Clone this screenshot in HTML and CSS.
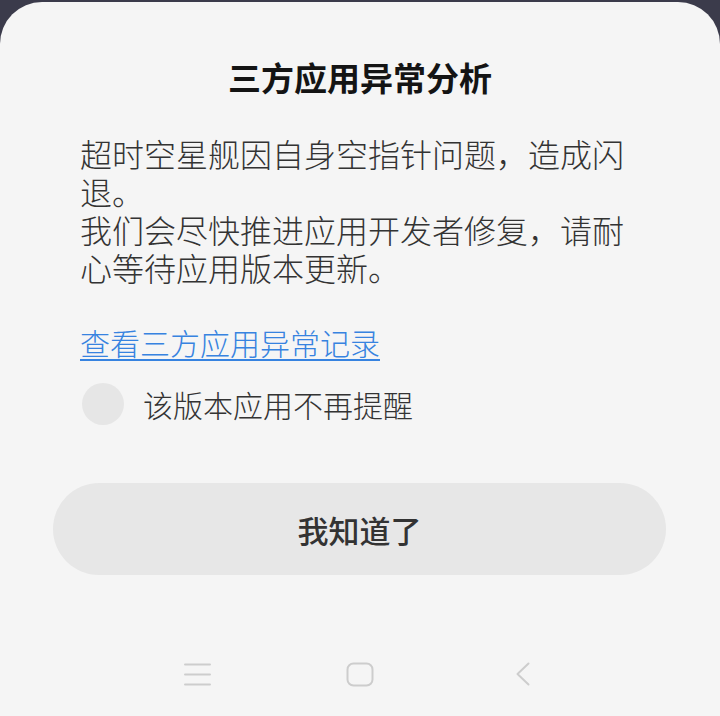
FILE: index.html
```html
<!DOCTYPE html>
<html lang="zh-CN">
<head>
<meta charset="utf-8">
<title>三方应用异常分析</title>
<link rel="stylesheet" href="styles.css">
</head>
<body>
<div class="sheet">
  <h1 class="title">三方应用异常分析</h1>
  <p class="message">超时空星舰因自身空指针问题，造成闪退。<br>我们会尽快推进应用开发者修复，请耐心等待应用版本更新。</p>
  <a class="record-link" href="#">查看三方应用异常记录</a>
  <label class="check-row">
    <span class="check-circle"></span>
    <span class="check-text">该版本应用不再提醒</span>
  </label>
  <button class="ok-button" type="button">我知道了</button>
  <nav class="navbar">
    <span class="nav-item">
      <svg width="27" height="23" viewBox="0 0 27 23" fill="none" stroke="#cdcdcd" stroke-width="2" stroke-linecap="round"><path d="M1 1.5H26M1 11.5H26M1 21.5H26"/></svg>
    </span>
    <span class="nav-item">
      <svg width="28" height="25" viewBox="0 0 28 25" fill="none" stroke="#cdcdcd" stroke-width="2"><rect x="1.5" y="1.5" width="25" height="22" rx="6"/></svg>
    </span>
    <span class="nav-item">
      <svg width="14" height="24" viewBox="0 0 14 24" fill="none" stroke="#cdcdcd" stroke-width="2" stroke-linecap="round" stroke-linejoin="round"><path d="M12.5 1.5L1.5 12L12.5 22.5"/></svg>
    </span>
  </nav>
</div>
</body>
</html>
```
FILE: styles.css
```css
html, body {
  margin: 0;
  padding: 0;
  background: #3b3b4b;
}
body {
  width: 720px;
  height: 716px;
  overflow: hidden;
  font-family: "Noto Sans CJK SC", "Noto Sans", sans-serif;
}
.sheet {
  margin-top: 2px;
  height: 714px;
  background: #f5f5f5;
  border-radius: 42px 42px 0 0;
  display: flex;
  flex-direction: column;
  box-sizing: border-box;
  padding-top: 55px;
}
.title {
  margin: 0;
  font-size: 33px;
  line-height: 40px;
  font-weight: 600;
  color: #141414;
  text-align: center;
}
.message {
  margin: 37px 80px 0 80px;
  font-size: 32px;
  line-height: 38px;
  font-weight: 300;
  color: #333333;
}
.record-link {
  margin: 36px 0 0 80px;
  align-self: flex-start;
  font-size: 30px;
  line-height: 40px;
  font-weight: 300;
  color: #3783e0;
  text-decoration: underline;
  text-decoration-thickness: 2px;
  text-underline-offset: 4px;
}
.check-row {
  margin: 21px 0 0 82px;
  display: flex;
  align-items: center;
  gap: 19px;
  height: 42px;
}
.check-circle {
  width: 42px;
  height: 42px;
  border-radius: 50%;
  background: #e6e6e6;
  flex: none;
}
.check-text {
  font-size: 30px;
  line-height: 40px;
  font-weight: 300;
  color: #333333;
}
.ok-button {
  margin: 58px 54px 0 53px;
  height: 92px;
  border: none;
  border-radius: 46px;
  background: #e7e7e7;
  font-family: "Noto Sans CJK SC", "Noto Sans", sans-serif;
  font-size: 31px;
  font-weight: 500;
  color: #333333;
  padding: 0;
}
.navbar {
  margin-top: 75px;
  height: 48px;
  display: grid;
  grid-template-columns: repeat(3, 163px);
  justify-content: center;
  align-items: center;
}
.nav-item {
  display: flex;
  justify-content: center;
  align-items: center;
}
.nav-item svg {
  display: block;
}
```
